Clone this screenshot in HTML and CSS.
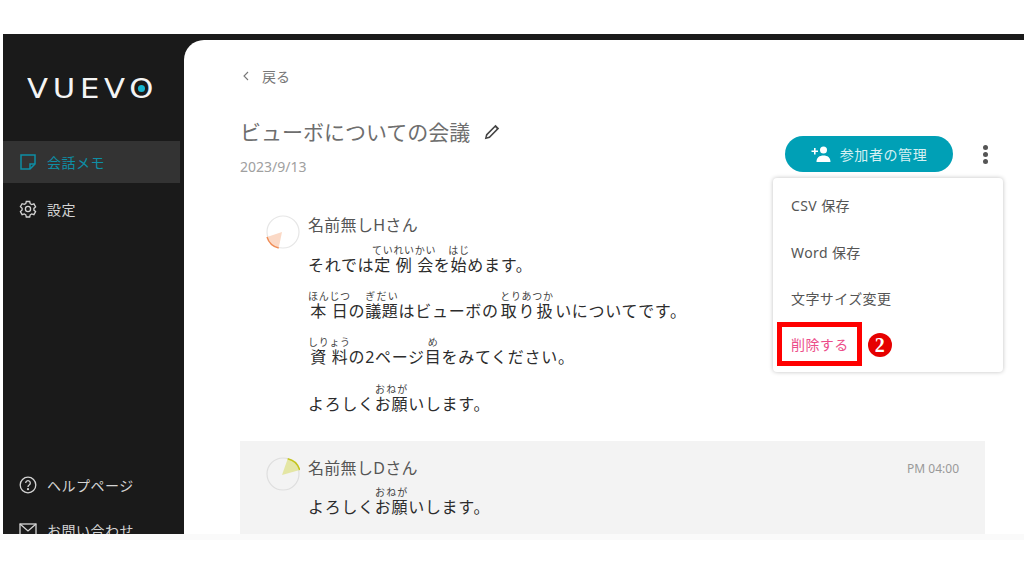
FILE: index.html
```html
<!DOCTYPE html>
<html lang="ja">
<head>
  <meta charset="UTF-8" />
  <title>VUEVO - 会話メモ</title>
  <link rel="stylesheet" href="styles.css">
</head>
<body>
  <div class="frame">
    <aside class="sidebar">
      <div class="logo">VUEV<span class="logo-o">O<i class="logo-dot"></i></span></div>

      <a class="nav-item active">
        <svg class="nav-icon" viewBox="0 0 18 18" fill="none" stroke="currentColor" stroke-width="1.5"><path d="M2 2h14v9l-5 5H2z"/><path d="M16 11h-5v5"/></svg>
        会話メモ
      </a>
      <a class="nav-item">
        <svg class="nav-icon" viewBox="0 0 18 18" fill="none" stroke="currentColor" stroke-width="1.3"><path d="M7.3 1.5h3.4l.5 2.2 1.5.9 2.2-.7 1.7 3-1.7 1.5v1.7l1.7 1.5-1.7 3-2.2-.7-1.5.9-.5 2.2H7.3l-.5-2.2-1.5-.9-2.2.7-1.7-3L3.1 9.9V8.2L1.4 6.7l1.7-3 2.2.7 1.5-.9z"/><circle cx="9" cy="9" r="2.6"/></svg>
        設定
      </a>

      <div class="nav-bottom">
        <a class="nav-item">
          <svg class="nav-icon" viewBox="0 0 18 18" fill="none" stroke="currentColor" stroke-width="1.3"><circle cx="9" cy="9" r="7.8"/><path d="M6.7 7a2.3 2.3 0 1 1 3.5 2c-.8.5-1.2.9-1.2 1.9"/><circle cx="9" cy="13.2" r=".5"/></svg>
          ヘルプページ
        </a>
        <a class="nav-item">
          <svg class="nav-icon" viewBox="0 0 18 18" fill="none" stroke="currentColor" stroke-width="1.3"><rect x="1" y="3" width="16" height="12"/><path d="M1 3l8 7 8-7"/></svg>
          お問い合わせ
        </a>
      </div>
    </aside>

    <main class="content">
      <a class="back">
        <svg class="back-icon" viewBox="0 0 8 10" fill="none" stroke="currentColor" stroke-width="1.1"><path d="M6 1L2 5l4 4"/></svg>
        戻る
      </a>

      <div class="page-head">
        <div>
          <h1 class="title">ビューボについての会議
            <svg class="pencil" viewBox="0 0 16 16"><path fill="#444" d="M11.500 .8l3.700 3.700L5.800 14 .8 15.200 2 10.200zM3.600 10.900l-.9 2.400 2.400-.9 7.600-7.600-1.500-1.500z"/></svg>
          </h1>
          <div class="date">2023/9/13</div>
        </div>
        <div class="actions">
          <button class="manage-btn">
            <svg class="manage-icon" viewBox="0 0 20 16" fill="#fff"><circle cx="12.500" cy="4" r="3.500"/><path d="M5.500 16c0-4.500 3-6.500 7-6.500s7 2 7 6.500zM3 2h1.600v2.500H7V6H4.600v2.500H3V6H.5V4.500H3z"/></svg>
            参加者の管理
          </button>
          <span class="kebab"><i></i><i></i><i></i></span>
        </div>
      </div>

      <section class="message first">
        <svg class="avatar" viewBox="0 0 34 34">
          <circle cx="17" cy="17" r="16" fill="none" stroke="#e6e6e6" stroke-width="1.2"/>
          <path d="M16 17L1 22A16 16 0 0 0 12.700 33z" fill="#fbd9c6"/>
          <path d="M1 22A16 16 0 0 0 12.700 33" fill="none" stroke="#f08c55" stroke-width="1.400"/>
        </svg>
        <div class="message-body">
          <div class="speaker">名前無しHさん</div>
          <p class="line">それでは<ruby>定例会<rt>ていれいかい</rt></ruby>を<ruby>始<rt>はじ</rt></ruby>めます。</p>
          <p class="line"><ruby>本日<rt>ほんじつ</rt></ruby>の<ruby>議題<rt>ぎだい</rt></ruby>はビューボの<ruby class="ruby-long">取り扱<rt>とりあつか</rt></ruby>いについてです。</p>
          <p class="line"><ruby>資料<rt>しりょう</rt></ruby>の2ページ<ruby>目<rt>め</rt></ruby>をみてください。</p>
          <p class="line">よろしく<ruby>お願<rt>おねが</rt></ruby>いします。</p>
        </div>
      </section>

      <section class="message shaded">
        <svg class="avatar" viewBox="0 0 34 34">
          <circle cx="17" cy="17" r="16" fill="none" stroke="#dedede" stroke-width="1.2"/>
          <path d="M16 18L21.700 1.700A16 16 0 0 1 33.700 13z" fill="#e4e6a4"/>
          <path d="M21.700 1.700A16 16 0 0 1 33.700 13" fill="none" stroke="#c4c41c" stroke-width="1.400"/>
        </svg>
        <div class="message-body">
          <div class="speaker-row">
            <div class="speaker">名前無しDさん</div>
            <span class="time">PM 04:00</span>
          </div>
          <p class="line">よろしく<ruby>お願<rt>おねが</rt></ruby>いします。</p>
        </div>
      </section>

      <ul class="menu">
        <li class="menu-item">CSV 保存</li>
        <li class="menu-item">Word 保存</li>
        <li class="menu-item">文字サイズ変更</li>
        <li class="menu-item danger"><span class="danger-box">削除する</span><span class="step-badge">2</span></li>
      </ul>
    </main>
  </div>
  <div class="bottom-band"></div>
</body>
</html>
```

FILE: styles.css
```css
* {
  box-sizing: border-box;
}

body {
  margin: 0;
  background: #fff;
  font-family: "Noto Sans", "Noto Sans CJK JP", sans-serif;
  color: #333;
  overflow: hidden;
}

.frame {
  display: flex;
  height: 500px;
  margin: 34px 0 0 3px;
  background: #1a1a1a;
  overflow: hidden;
}

/* sidebar */
.sidebar {
  display: flex;
  flex-direction: column;
  flex: 0 0 181px;
  height: 520px;
  color: #d4d4d4;
}

.logo {
  margin: 37px 0 0 24px;
  height: 70px;
  font-family: "DejaVu Sans", sans-serif;
  font-size: 26px;
  line-height: 36px;
  letter-spacing: 4px;
  color: #f4f4f4;
  transform: scaleX(1.18);
  transform-origin: left center;
}

.logo-o {
  position: relative;
}

.logo-dot {
  position: absolute;
  left: 7px;
  top: 11px;
  width: 6px;
  height: 7px;
  border-radius: 50%;
  background: #17b5d0;
}

.nav-item {
  display: flex;
  align-items: center;
  gap: 10px;
  width: 177px;
  height: 42px;
  padding-left: 16px;
  margin-bottom: 5px;
  font-size: 14px;
  letter-spacing: .5px;
}

.nav-item.active {
  background: #333;
  color: #0e8ea5;
}

.nav-icon {
  flex: none;
  width: 18px;
  height: 18px;
}

.nav-bottom {
  margin-top: auto;
}

.nav-bottom .nav-item {
  margin-bottom: 3px;
}

/* main column */
.content {
  position: relative;
  flex: 1;
  margin-top: 6px;
  padding: 25px 39px 0 56px;
  background: #fff;
  border-top-left-radius: 20px;
}

.back {
  display: flex;
  align-items: center;
  gap: 12px;
  height: 22px;
  padding-left: 2px;
  font-size: 14px;
  color: #777;
}

.back-icon {
  width: 8px;
  height: 10px;
}

.page-head {
  display: flex;
  justify-content: space-between;
  margin-top: 30px;
}

.title {
  display: flex;
  align-items: center;
  gap: 14px;
  margin: 0;
  font-size: 21px;
  font-weight: 400;
  line-height: 30px;
  color: #6e6e6e;
}

.pencil {
  width: 16px;
  height: 16px;
}

.date {
  margin-top: 10px;
  font-size: 14px;
  line-height: 20px;
  color: #a0a0a0;
}

.actions {
  display: flex;
  align-items: center;
  gap: 30px;
  height: 36px;
  margin-top: 19px;
  margin-right: -3px;
}

.manage-btn {
  display: flex;
  align-items: center;
  justify-content: center;
  gap: 9px;
  width: 168px;
  height: 36px;
  border: none;
  border-radius: 18px;
  background: #00a0b6;
  color: #d6f0f3;
  font-family: inherit;
  font-size: 14px;
  letter-spacing: .6px;
}

.manage-icon {
  width: 20px;
  height: 16px;
}

.kebab {
  display: flex;
  flex-direction: column;
  gap: 2px;
  width: 5px;
}

.kebab i {
  width: 5px;
  height: 5px;
  border-radius: 50%;
  background: #555;
}

/* messages */
.message {
  display: flex;
  gap: 8px;
  padding: 16px 26px;
}

.message.first {
  margin-top: 22px;
  padding-bottom: 25px;
}

.message.shaded {
  height: 200px;
  background: #f3f3f3;
}

.avatar {
  flex: none;
  width: 34px;
  height: 34px;
}

.message-body {
  flex: 1;
}

.speaker-row {
  display: flex;
  justify-content: space-between;
  align-items: center;
}

.speaker {
  margin-top: -1px;
  font-size: 16px;
  line-height: 22px;
  letter-spacing: .3px;
  color: #555;
}

.speaker-row .speaker {
  margin-top: 0;
}

.time {
  font-size: 12px;
  color: #999;
}

.line {
  margin: 14px 0 0;
  font-size: 16px;
  line-height: 24px;
  letter-spacing: .7px;
  color: #2c2c2c;
}

.speaker + .line {
  margin-top: 9px;
}

.line:last-child {
  margin-top: 15px;
}

.speaker-row + .line:last-child {
  margin-top: 8px;
}

.line rt {
  font-size: 10px;
  line-height: 18px;
  color: #444;
}

.ruby-long {
  margin: 0 2px;
}

/* overflow menu */
.menu {
  position: absolute;
  left: 589px;
  top: 138px;
  width: 230px;
  height: 194px;
  margin: 0;
  padding: 4px 0 0;
  list-style: none;
  background: #fff;
  border-radius: 4px;
  box-shadow: 0 0 4px rgba(0,0,0,0.25);
}

.menu-item {
  display: flex;
  align-items: center;
  height: 46.5px;
  padding-left: 18px;
  font-size: 14px;
  letter-spacing: .4px;
  color: #555;
}

.menu-item.danger {
  padding-left: 4px;
  gap: 6px;
  color: #ec4d8a;
}

.danger-box {
  display: flex;
  align-items: center;
  flex: none;
  width: 85px;
  height: 44px;
  margin-top: -2px;
  padding-left: 9px;
  border: 5px solid #f00;
}

.step-badge {
  width: 24px;
  height: 24px;
  border-radius: 50%;
  background: #e60000;
  color: #fff;
  font-family: "Liberation Serif", serif;
  font-weight: 700;
  font-size: 20px;
  line-height: 24px;
  text-align: center;
}

.bottom-band {
  height: 6px;
  background: #fafafa;
}
```
